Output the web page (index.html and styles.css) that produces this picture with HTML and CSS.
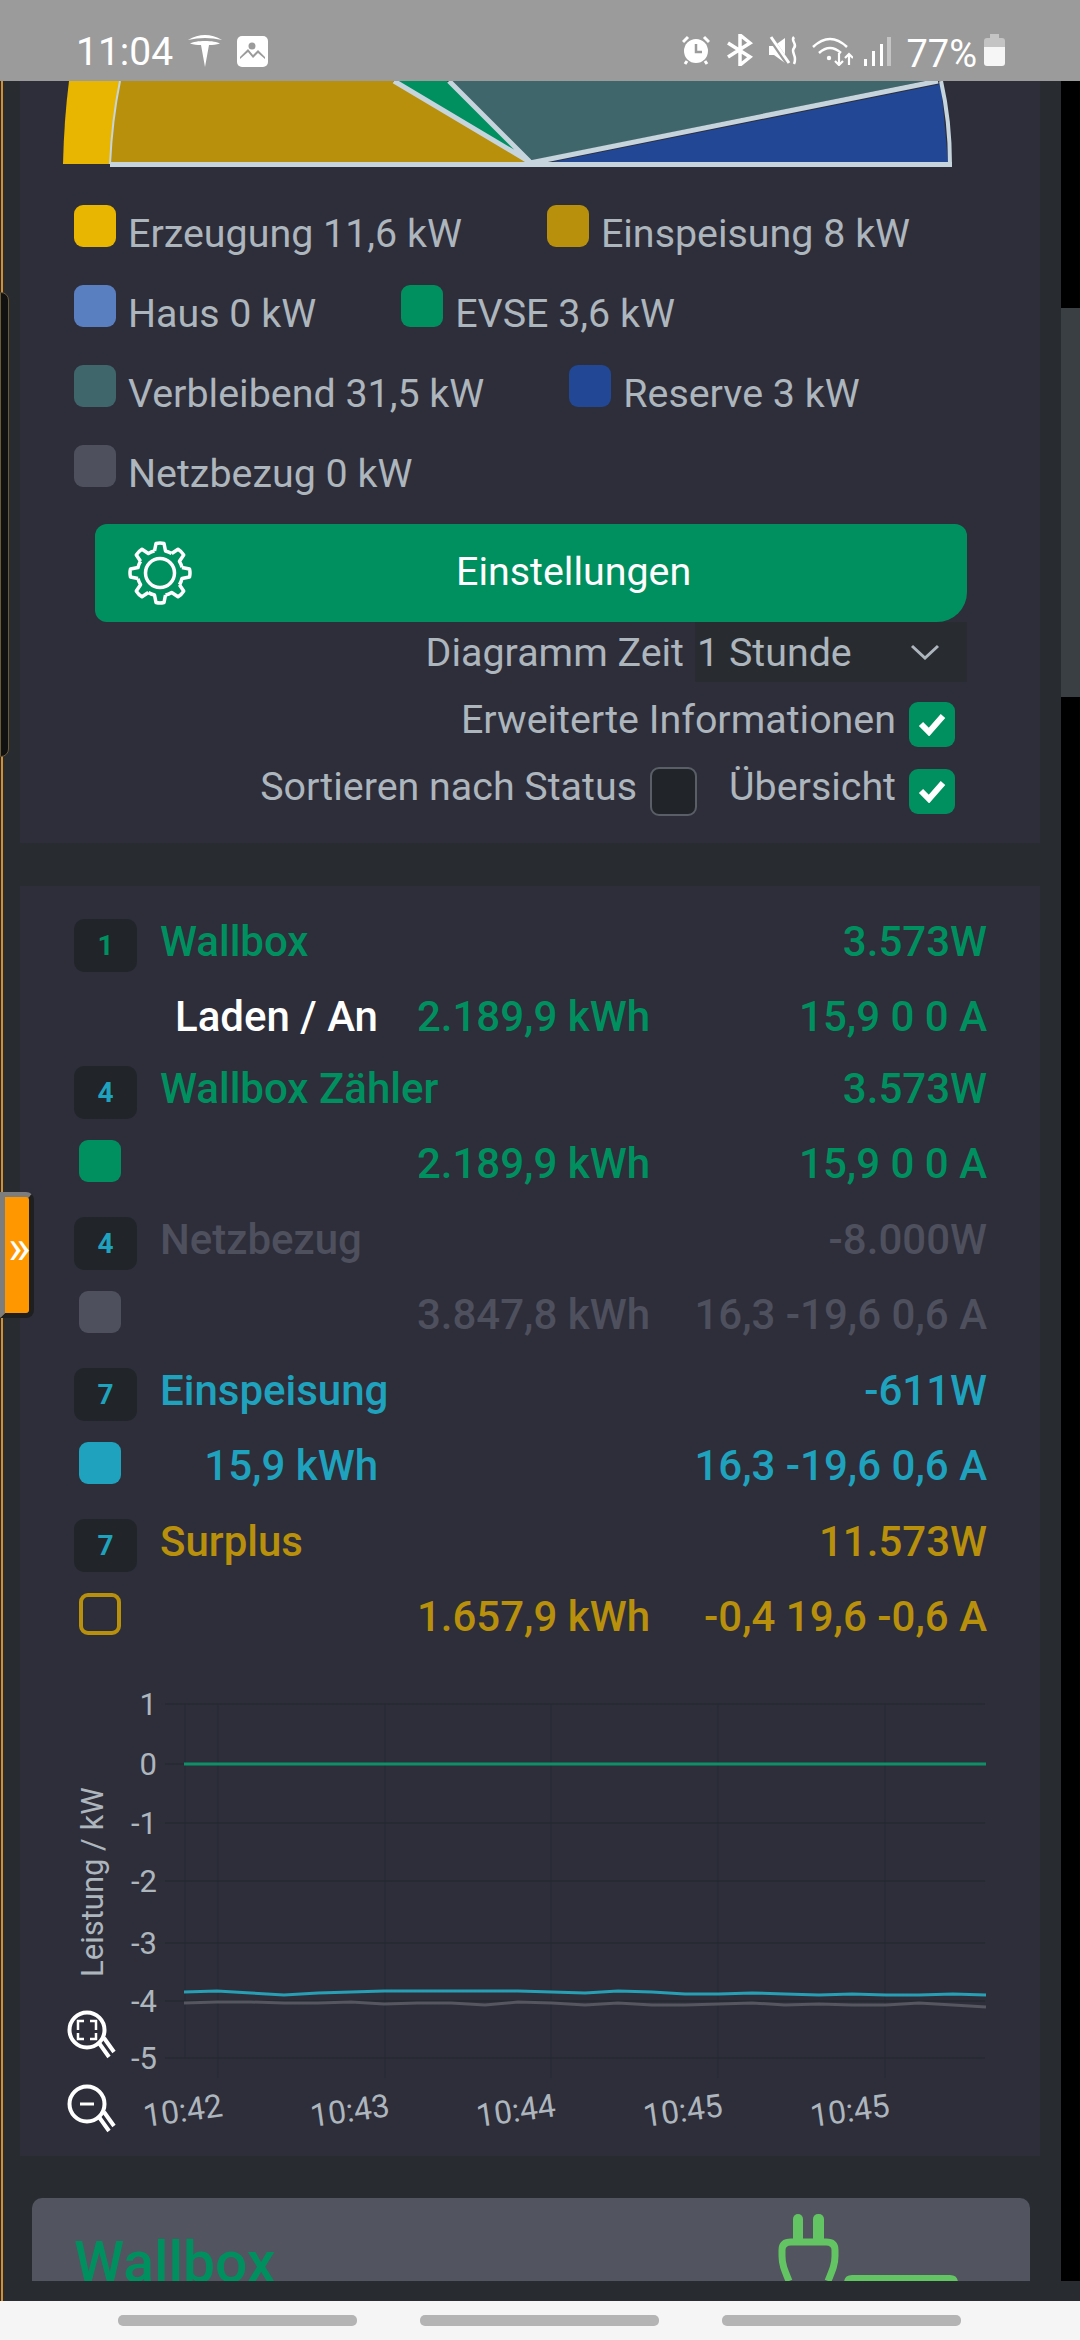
FILE: index.html

```html
<!DOCTYPE html>
<html lang="de">
<head>
  <meta charset="UTF-8">
  <meta name="viewport" content="width=device-width, initial-scale=1.0">
  <title>Energie</title>
  <link rel="stylesheet" href="styles.css">
</head>
<body>

  <header class="statusbar">
    <span class="clock">11:04</span>
    <svg class="tesla" width="36" height="33" viewBox="0 0 36 33"><path d="M1 6Q18-4 35 6 18 2 1 6Z"/><path d="M3 9.500C8 6 28 6 33 9.500 29 11 26 11 22 11L18 33 14 11C10 11 7 11 3 9.500Z"/></svg>
    <svg class="gallery" width="31" height="31" viewBox="0 0 31 31"><rect width="31" height="31" rx="5"/><circle cx="15" cy="10" r="3.500" fill="#9b9b9b"/><path d="M3 26V21L11 13 16 19 21 14 28 21V26Z" fill="#9b9b9b"/><path d="M3 26V23L11 16 16 22 21 17 28 23V27H3Z"/></svg>
    <div class="status-icons">
      <svg width="28" height="31" viewBox="0 0 28 31"><circle cx="14" cy="16" r="12"/><path d="M14 9v8h6" fill="none" stroke="#9b9b9b" stroke-width="2.500"/><path d="M1 7 6 2M27 7 22 2M5 26 3 29M23 26 25 29" stroke="#fff" stroke-width="3" fill="none"/></svg>
      <svg width="28" height="32" viewBox="0 0 28 32"><path d="M2 9 24 23 14 31V1L24 9 2 23" fill="none" stroke="#fff" stroke-width="3.500"/></svg>
      <svg width="29" height="29" viewBox="0 0 29 29"><path d="M0 10H5L16 2V27L5 19H0Z"/><path d="M0 0 20 29" stroke="#9b9b9b" stroke-width="5"/><path d="M2 1 20 27" stroke="#fff" stroke-width="3"/><path d="M25 1C21 5 29 8 25 12 21 16 29 20 25 28" fill="none" stroke="#fff" stroke-width="2.500"/></svg>
      <svg width="41" height="31" viewBox="0 0 41 31"><path d="M1 12Q18-4 35 12M7 18Q18 8 29 18" fill="none" stroke="#fff" stroke-width="2.500"/><circle cx="17" cy="23" r="2.200"/><path d="M27 18V30M23 26 27 30 31 26M37 30V19M33 23 37 19 41 23" fill="none" stroke="#fff" stroke-width="2.200"/></svg>
      <svg class="signal" width="28" height="29" viewBox="0 0 28 29"><rect x="1" y="22" width="3" height="7"/><rect x="9" y="14" width="3" height="15"/><rect x="17" y="7" width="3" height="22"/><rect x="24" width="4" height="29" fill="#c4c4c4"/></svg>
      <span class="battery-text">77%</span>
      <svg width="21" height="33" viewBox="0 0 21 33"><path d="M6 0H15V4H6Z" fill="#c4c4c4"/><path d="M3 4H18Q21 4 21 7V13H0V7Q0 4 3 4Z" fill="#c4c4c4"/><path d="M0 13H21V29Q21 32 18 32H3Q0 32 0 29Z" fill="#f6f6f6"/></svg>
    </div>
  </header>

  <div class="page">
    <div class="main">
      <div class="content">

        <section class="card card-top">
          <svg class="pie" width="1020" height="88" viewBox="20 81 1020 88">
            <path d="M69 81Q64 120 63 164H115L125 81Z" fill="#e8b500"/>
            <path d="M449 81 530 161 925 81Z" fill="#3f666b"/>
            <path d="M552 162 941 84 948 162Z" fill="#214795"/>
            <path d="M397 81 524 159 447 81Z" fill="#00905f"/>
            <path d="M120 81Q112 120 110 162H528L393 81Z" fill="#b8900b"/>
            <path d="M120 81Q112 120 110 164" fill="none" stroke="#c5d4dd" stroke-width="2"/>
            <path d="M394 81 530 162 449 81M530 163 938 81" fill="none" stroke="#c5d4dd" stroke-width="5"/>
            <path d="M941 81Q950 120 950 165" fill="none" stroke="#c5d4dd" stroke-width="4"/>
            <rect x="110" y="162" width="842" height="5" fill="#c5d4dd"/>
          </svg>

          <div class="legend">
            <div class="legend-item"><span class="swatch c-yield"></span><span class="legend-text">Erzeugung 11,6 kW</span></div>
            <div class="legend-item"><span class="swatch c-feed"></span><span class="legend-text">Einspeisung 8 kW</span></div>
            <div class="legend-item"><span class="swatch c-house"></span><span class="legend-text">Haus 0 kW</span></div>
            <div class="legend-item"><span class="swatch c-evse"></span><span class="legend-text">EVSE 3,6 kW</span></div>
            <div class="legend-item"><span class="swatch c-left"></span><span class="legend-text">Verbleibend 31,5 kW</span></div>
            <div class="legend-item"><span class="swatch c-reserve"></span><span class="legend-text">Reserve 3 kW</span></div>
            <div class="legend-item"><span class="swatch c-grid"></span><span class="legend-text">Netzbezug 0 kW</span></div>
          </div>

          <button class="settings-btn" type="button">
            <svg class="gear" width="64" height="64" viewBox="0 0 64 64" fill="none" stroke="#fff" stroke-width="3.500" stroke-linejoin="round">
              <defs><path id="tooth" d="M26.500 10 28 2.500Q32 1.500 36 2.500L37.500 10Q41 10.800 43.670 12.560"/></defs>
              <use href="#tooth"/>
              <use href="#tooth" transform="rotate(45 32 32)"/>
              <use href="#tooth" transform="rotate(90 32 32)"/>
              <use href="#tooth" transform="rotate(135 32 32)"/>
              <use href="#tooth" transform="rotate(180 32 32)"/>
              <use href="#tooth" transform="rotate(225 32 32)"/>
              <use href="#tooth" transform="rotate(270 32 32)"/>
              <use href="#tooth" transform="rotate(315 32 32)"/>
              <circle cx="32" cy="32" r="14.500"/>
            </svg>
            <span class="settings-label">Einstellungen</span>
          </button>

          <div class="time-row">
            <span class="option-text">Diagramm Zeit</span>
            <div class="select">
              <span>1 Stunde</span>
              <svg width="30" height="16" viewBox="0 0 30 16"><path d="M2 2 15 14 28 2" fill="none" stroke="#adb5bd" stroke-width="3"/></svg>
            </div>
          </div>

          <div class="option-row">
            <span class="option-text">Erweiterte Informationen</span>
            <span class="check on"><svg width="28" height="24" viewBox="0 0 28 24"><path d="M3 12 11 20 25 4" fill="none" stroke="#fff" stroke-width="6"/></svg></span>
          </div>
          <div class="option-row option-row-last">
            <span class="option-text">Sortieren nach Status</span>
            <span class="check off"></span>
            <span class="option-text option-gap">Übersicht</span>
            <span class="check on"><svg width="28" height="24" viewBox="0 0 28 24"><path d="M3 12 11 20 25 4" fill="none" stroke="#fff" stroke-width="6"/></svg></span>
          </div>
        </section>

        <section class="card card-list">
          <div class="device device-first t-green">
            <div class="device-head">
              <span class="badge">1</span>
              <span class="device-name">Wallbox</span>
              <span class="device-power">3.573W</span>
            </div>
            <div class="device-data">
              <span class="device-status">Laden / An</span>
              <span class="device-cell">2.189,9 kWh</span>
              <span class="device-cell">15,9 0 0 A</span>
            </div>
          </div>

          <div class="device t-green">
            <div class="device-head">
              <span class="badge t-teal">4</span>
              <span class="device-name">Wallbox Zähler</span>
              <span class="device-power">3.573W</span>
            </div>
            <div class="device-data">
              <span class="device-status"><span class="swatch c-evse"></span></span>
              <span class="device-cell">2.189,9 kWh</span>
              <span class="device-cell">15,9 0 0 A</span>
            </div>
          </div>

          <div class="device t-grey">
            <div class="device-head">
              <span class="badge t-teal">4</span>
              <span class="device-name">Netzbezug</span>
              <span class="device-power">-8.000W</span>
            </div>
            <div class="device-data">
              <span class="device-status"><span class="swatch c-grid"></span></span>
              <span class="device-cell">3.847,8 kWh</span>
              <span class="device-cell">16,3 -19,6 0,6 A</span>
            </div>
          </div>

          <div class="device t-teal">
            <div class="device-head">
              <span class="badge t-teal">7</span>
              <span class="device-name">Einspeisung</span>
              <span class="device-power">-611W</span>
            </div>
            <div class="device-data">
              <span class="device-status"><span class="swatch c-feedin"></span><span>15,9 kWh</span></span>
              <span class="device-cell"></span>
              <span class="device-cell">16,3 -19,6 0,6 A</span>
            </div>
          </div>

          <div class="device t-gold">
            <div class="device-head">
              <span class="badge t-teal">7</span>
              <span class="device-name">Surplus</span>
              <span class="device-power">11.573W</span>
            </div>
            <div class="device-data">
              <span class="device-status"><span class="swatch swatch-outline"></span></span>
              <span class="device-cell">1.657,9 kWh</span>
              <span class="device-cell">-0,4 19,6 -0,6 A</span>
            </div>
          </div>

          <svg class="chart" width="1020" height="486" viewBox="20 1670 1020 486">
            <g stroke="#272933" stroke-width="2">
              <path d="M165 1704H985M165 1764H985M165 1823H985M165 1881H985M165 1943H985M165 2001H985M165 2058H985"/>
              <path d="M185 1704V2058M218 1704V2078M385 1704V2078M551 1704V2078M718 1704V2078M885 1704V2078" stroke-width="1"/>
            </g>
            <g class="chart-text" text-anchor="end">
              <text x="157" y="1715">1</text>
              <text x="157" y="1775">0</text>
              <text x="157" y="1834">-1</text>
              <text x="157" y="1892">-2</text>
              <text x="157" y="1954">-3</text>
              <text x="157" y="2012">-4</text>
              <text x="157" y="2069">-5</text>
            </g>
            <text class="chart-text" transform="translate(103 1977) rotate(-90)">Leistung / kW</text>
            <g class="chart-text chart-text-big">
              <text transform="translate(145 2127) rotate(-8)">10:42</text>
              <text transform="translate(312 2127) rotate(-8)">10:43</text>
              <text transform="translate(478 2127) rotate(-8)">10:44</text>
              <text transform="translate(645 2127) rotate(-8)">10:45</text>
              <text transform="translate(812 2127) rotate(-8)">10:45</text>
            </g>
            <path d="M184 1764H986" stroke="#0f8f68" stroke-width="3"/>
            <polyline fill="none" stroke="#27a0b6" stroke-width="3" points="184,1992 217,1991 251,1993 284,1995 318,1993 351,1992 384,1991 418,1991 451,1991 485,1991 518,1991 552,1992 585,1993 618,1991 652,1992 685,1994 719,1994 752,1993 785,1994 819,1995 852,1994 886,1995 919,1995 953,1994 986,1995"/>
            <polyline fill="none" stroke="#55565f" stroke-width="3" points="184,2003 217,2002 251,2002 284,2003 318,2003 351,2002 384,2004 418,2003 451,2003 485,2005 518,2002 552,2003 585,2005 618,2003 652,2005 685,2005 719,2004 752,2003 785,2005 819,2004 852,2005 886,2005 919,2003 953,2005 986,2007"/>
            <g fill="none" stroke="#fff" stroke-width="4">
              <circle cx="87" cy="2030" r="17.500"/>
              <path d="M99 2043 109 2057M104 2038 114 2052"/>
              <path d="M78 2030V2021H84M90 2021H96V2030M96 2033V2039H90M84 2039H78V2033" stroke-width="2.500"/>
              <circle cx="87" cy="2104" r="17.500"/>
              <path d="M99 2117 109 2131M104 2112 114 2126"/>
              <path d="M80 2104H94" stroke-width="3"/>
            </g>
          </svg>
        </section>

        <section class="wallbox-card">
          <h2 class="wallbox-title">Wallbox</h2>
          <svg class="plug" width="180" height="67" viewBox="0 0 180 67">
            <rect x="15" width="10" height="30" rx="5" fill="#62c462"/>
            <rect x="35" width="11" height="30" rx="5" fill="#62c462"/>
            <path d="M11 67C6 55 4 50 4 42V36Q4 28 13 28H48Q57 28 57 36V42C57 50 55 55 50 67" fill="none" stroke="#62c462" stroke-width="7"/>
            <path d="M66 67V69 H180V69Q180 61 172 61H74Q66 61 66 69Z" fill="#62c462"/>
          </svg>
        </section>

      </div>
      <div class="scrollbar"><div class="scroll-thumb"></div></div>
    </div>
    <div class="strip"></div>

    <div class="side-panel"></div>
    <div class="side-tab"><span class="side-chevrons">»</span></div>
  </div>

  <nav class="navbar">
    <span class="nav-pill"></span>
    <span class="nav-pill"></span>
    <span class="nav-pill"></span>
  </nav>

</body>
</html>
```

FILE: styles.css

```css
* {
  box-sizing: border-box;
}

body {
  margin: 0;
  width: 1080px;
  height: 2340px;
  overflow: hidden;
  display: flex;
  flex-direction: column;
  font-family: Roboto, "Liberation Sans", sans-serif;
  font-size: 39.4px;
  line-height: 48px;
  color: #adb5bd;
  background-color: #282b30;
}

/* status bar */
.statusbar {
  height: 81px;
  flex: none;
  display: flex;
  align-items: flex-start;
  padding: 30px 75px 0 76px;
  background-color: #9b9b9b;
  color: #fff;
}

.statusbar svg {
  fill: #fff;
  display: block;
}

.clock {
  font-size: 39px;
  line-height: 44px;
}

.tesla {
  margin: 4px 0 0 14px;
}

.gallery {
  margin: 6px 0 0 14px;
}

.status-icons {
  margin-left: auto;
  margin-top: 4px;
  display: flex;
  align-items: flex-start;
  gap: 16px;
}

.status-icons svg:nth-child(1) { margin-top: 1px; }
.status-icons svg:nth-child(3) { margin-top: 2px; margin-left: -1px; }
.status-icons svg:nth-child(4) { margin-top: 1px; margin-left: -2px; }
.status-icons svg:nth-child(5) { margin-top: 3px; margin-left: -6px; }

.battery-text {
  font-size: 38px;
  line-height: 40px;
  margin-left: -1px;
  margin-right: -9px;
}

/* page */
.page {
  flex: 1;
  position: relative;
  margin-left: 1px;
  border-left: 2px solid #d68f2a;
}

.main {
  height: 2200px;
  display: flex;
}

.content {
  width: 1058px;
  flex: none;
  padding-left: 17px;
  overflow: hidden;
}

.scrollbar {
  flex: 1;
  background-color: #000;
  padding-top: 227px;
}

.scroll-thumb {
  height: 389px;
  background-color: #3a3f43;
}

.strip {
  height: 20px;
}

.card {
  width: 1020px;
  background-color: #2d2e3a;
}

.card-top {
  height: 762px;
}

.pie {
  display: block;
}

/* legend */
.legend {
  margin: 36px 73px -1px 54px;
  display: flex;
  flex-wrap: wrap;
  column-gap: 85px;
}

.legend-item {
  height: 80px;
  display: flex;
  gap: 12px;
}

.legend-text {
  margin-top: 5px;
}

.swatch {
  display: block;
  flex: none;
  width: 42px;
  height: 42px;
  border-radius: 9px;
}

.c-yield { background-color: #e8b500; }
.c-feed { background-color: #b8900b; }
.c-house { background-color: #5a7fc0; }
.c-evse { background-color: #00905f; }
.c-left { background-color: #3f666b; }
.c-reserve { background-color: #214795; }
.c-grid { background-color: #4f505e; }
.c-feedin { background-color: #1fa2bd; }

.swatch-outline {
  border: 4px solid #b8900b;
}

/* settings */
.settings-btn {
  display: flex;
  align-items: center;
  width: 872px;
  height: 98px;
  margin-left: 75px;
  padding: 0 0 0 33px;
  border: none;
  border-radius: 12px 12px 30px 12px;
  background-color: #00905f;
  color: #fff;
  font: inherit;
}

.gear {
  flex: none;
  display: block;
}

.settings-label {
  margin-left: 264px;
  margin-bottom: 2px;
}

.time-row {
  height: 60px;
  display: flex;
  justify-content: flex-end;
  align-items: center;
  padding-right: 73px;
  gap: 11px;
}

.time-row span {
  margin-top: 2px;
}

.select {
  width: 272px;
  height: 60px;
  display: flex;
  align-items: center;
  justify-content: space-between;
  padding: 0 27px 0 2px;
  background-color: #282b30;
}

.option-row {
  height: 46px;
  margin-top: 19px;
  display: flex;
  justify-content: flex-end;
  align-items: center;
  padding-right: 85px;
  gap: 13px;
}

.option-row-last {
  margin-top: 21px;
}

.option-text {
  margin-bottom: 8px;
}

.time-row .option-text {
  margin-bottom: 0;
}

.option-gap {
  margin-left: 19px;
}

.check {
  width: 46px;
  height: 45px;
  flex: none;
  display: flex;
  align-items: center;
  justify-content: center;
  border-radius: 9px;
}

.check.on {
  background-color: #00905f;
}

.check.off {
  height: 49px;
  width: 47px;
  background-color: #212429;
  border: 2px solid #5a5e66;
}

/* device list */
.card-list {
  height: 1270px;
  margin-top: 43px;
  padding-top: 33px;
}

.device {
  height: 151px;
  padding: 0 53px 0 54px;
  font-size: 42px;
  font-weight: 500;
}

.device-first {
  height: 147px;
}

.device-head {
  height: 53px;
  display: flex;
  align-items: center;
}

.badge {
  width: 63px;
  height: 53px;
  display: flex;
  align-items: center;
  justify-content: center;
  border-radius: 10px;
  background-color: #212429;
  font-size: 28px;
  font-weight: 700;
}

.device-name {
  margin: 0 0 8px 23px;
}

.device-power {
  margin: 0 0 8px auto;
}

.device-data {
  margin-top: 21px;
  display: grid;
  grid-template-columns: 304px 272px 1fr;
  text-align: right;
}

.device-status {
  display: flex;
  justify-content: space-between;
  padding-left: 5px;
}

.device-first .device-status {
  display: block;
  color: #fff;
}

.t-green { color: #00905f; }
.t-teal { color: #1fa2bd; }
.t-grey { color: #4f505e; }
.t-gold { color: #b8900b; }

/* chart */
.chart {
  display: block;
}

.chart-text {
  fill: #adb5bd;
  font-size: 31px;
}

.chart-text-big {
  font-size: 32px;
}

/* wallbox card, cut by the window */
.wallbox-card {
  width: 998px;
  height: 83px;
  margin: 42px 0 0 12px;
  padding: 16px 72px 0 42px;
  display: flex;
  align-items: flex-start;
  justify-content: space-between;
  overflow: hidden;
  border-radius: 10px 10px 0 0;
  background-color: #52545f;
}

.wallbox-title {
  margin: 21px 0 0;
  font-size: 57px;
  line-height: 56px;
  font-weight: 500;
  color: #00905f;
}

.plug {
  flex: none;
  display: block;
}

/* things lying over the left edge */
.side-panel {
  position: absolute;
  left: -3px;
  top: 211px;
  width: 9px;
  height: 465px;
  background-color: #111;
  border: 1px solid #6b5a3a;
  border-radius: 0 8px 8px 0;
}

.side-tab {
  position: absolute;
  left: -3px;
  top: 1111px;
  width: 34px;
  height: 126px;
  background-color: #ff9800;
  border-style: solid;
  border-color: #7d7d7d #1f1f1f #1f1f1f #7d7d7d;
  border-width: 5px;
  border-radius: 0 8px 8px 0;
}

.side-chevrons {
  position: absolute;
  left: 3px;
  top: 27px;
  color: #fff;
  font-size: 48px;
  line-height: 48px;
}

/* bottom bar */
.navbar {
  height: 39px;
  flex: none;
  display: flex;
  padding: 14px 0 0 118px;
  gap: 63px;
  background-color: #f5f5f5;
}

.nav-pill {
  width: 239px;
  height: 11px;
  border-radius: 5px;
  background-color: #b4b4b4;
}
```
